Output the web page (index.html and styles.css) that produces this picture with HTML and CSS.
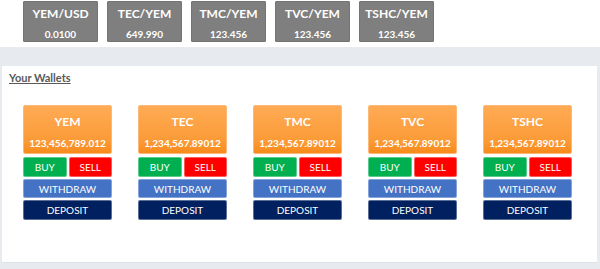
FILE: index.html
```html
<!DOCTYPE html>
<html lang="en">
<head>
  <meta charset="UTF-8">
  <title>Wallets</title>
  <link rel="stylesheet" href="styles.css">
</head>
<body>
  <div class="rates">
    <div class="rate"><span>YEM/USD</span><span>0.0100</span></div>
    <div class="rate"><span>TEC/YEM</span><span>649.990</span></div>
    <div class="rate"><span>TMC/YEM</span><span>123.456</span></div>
    <div class="rate"><span>TVC/YEM</span><span>123.456</span></div>
    <div class="rate"><span>TSHC/YEM</span><span>123.456</span></div>
  </div>

  <div class="main">
    <div class="panel">
      <h2 class="title">Your Wallets</h2>
      <div class="wallets">
        <div class="wallet">
          <div class="balance"><span>YEM</span><span>123,456,789.012</span></div>
          <div class="trade">
            <button class="btn buy">BUY</button>
            <button class="btn sell">SELL</button>
          </div>
          <button class="btn withdraw">WITHDRAW</button>
          <button class="btn deposit">DEPOSIT</button>
        </div>
        <div class="wallet">
          <div class="balance"><span>TEC</span><span>1,234,567.89012</span></div>
          <div class="trade">
            <button class="btn buy">BUY</button>
            <button class="btn sell">SELL</button>
          </div>
          <button class="btn withdraw">WITHDRAW</button>
          <button class="btn deposit">DEPOSIT</button>
        </div>
        <div class="wallet">
          <div class="balance"><span>TMC</span><span>1,234,567.89012</span></div>
          <div class="trade">
            <button class="btn buy">BUY</button>
            <button class="btn sell">SELL</button>
          </div>
          <button class="btn withdraw">WITHDRAW</button>
          <button class="btn deposit">DEPOSIT</button>
        </div>
        <div class="wallet">
          <div class="balance"><span>TVC</span><span>1,234,567.89012</span></div>
          <div class="trade">
            <button class="btn buy">BUY</button>
            <button class="btn sell">SELL</button>
          </div>
          <button class="btn withdraw">WITHDRAW</button>
          <button class="btn deposit">DEPOSIT</button>
        </div>
        <div class="wallet">
          <div class="balance"><span>TSHC</span><span>1,234,567.89012</span></div>
          <div class="trade">
            <button class="btn buy">BUY</button>
            <button class="btn sell">SELL</button>
          </div>
          <button class="btn withdraw">WITHDRAW</button>
          <button class="btn deposit">DEPOSIT</button>
        </div>
      </div>
    </div>
  </div>
</body>
</html>
```

FILE: styles.css
```css
* {
  margin: 0;
  padding: 0;
  box-sizing: border-box;
}

body {
  font-family: Lato, "Liberation Sans", sans-serif;
  background: #fff;
  width: 600px;
  height: 269px;
  overflow: hidden;
}

.rates {
  display: flex;
  gap: 9px;
  height: 47px;
  padding: 1px 0 0 23px;
}

.rate {
  width: 75px;
  height: 41px;
  background: #7f7f7f;
  border: 1px solid #747474;
  border-radius: 1px;
  color: #fff;
  font-weight: bold;
  font-size: 10px;
  display: flex;
  flex-direction: column;
  align-items: center;
  justify-content: center;
  gap: 7px;
  padding-top: 2px;
}

.rate span:first-child {
  font-size: 12px;
}

.main {
  background: #e7ebef;
  height: 222px;
  padding: 19px 3px 6px 2px;
}

.panel {
  background: #fff;
  height: 197px;
  padding: 5px 0 0 0;
  border-bottom: 1px solid #dde2e7;
}

.title {
  font-size: 11px;
  font-weight: bold;
  color: #595959;
  text-decoration: underline;
  margin-left: 7px;
  line-height: 14px;
}

.wallets {
  display: flex;
  gap: 26px;
  padding-left: 21px;
  margin-top: 20px;
}

.wallet {
  width: 89px;
  display: flex;
  flex-direction: column;
  gap: 2px;
}

.balance {
  height: 49px;
  background: linear-gradient(to bottom, #ffab55, #fb9a36 75%, #f88a1a);
  border: 1px solid #fbb877;
  border-radius: 2px;
  color: #fff;
  font-weight: bold;
  font-size: 10px;
  display: flex;
  flex-direction: column;
  align-items: center;
  justify-content: center;
  gap: 8px;
  padding-top: 3px;
  margin-bottom: 1px;
}

.balance span:first-child {
  font-size: 12px;
}

.trade {
  display: flex;
  gap: 2px;
}

.btn {
  font-family: Lato, "Liberation Sans", sans-serif;
  font-size: 10px;
  color: #fff;
  border: 1px solid rgba(255,255,255,0.35);
  border-radius: 2px;
  height: 20px;
  cursor: pointer;
}

.trade .btn {
  flex: 1;
}

.buy {
  background: #00b050;
}

.sell {
  background: #ff0000;
}

.withdraw {
  background: #4472c4;
  height: 19px;
}

.deposit {
  background: #002060;
}
```
